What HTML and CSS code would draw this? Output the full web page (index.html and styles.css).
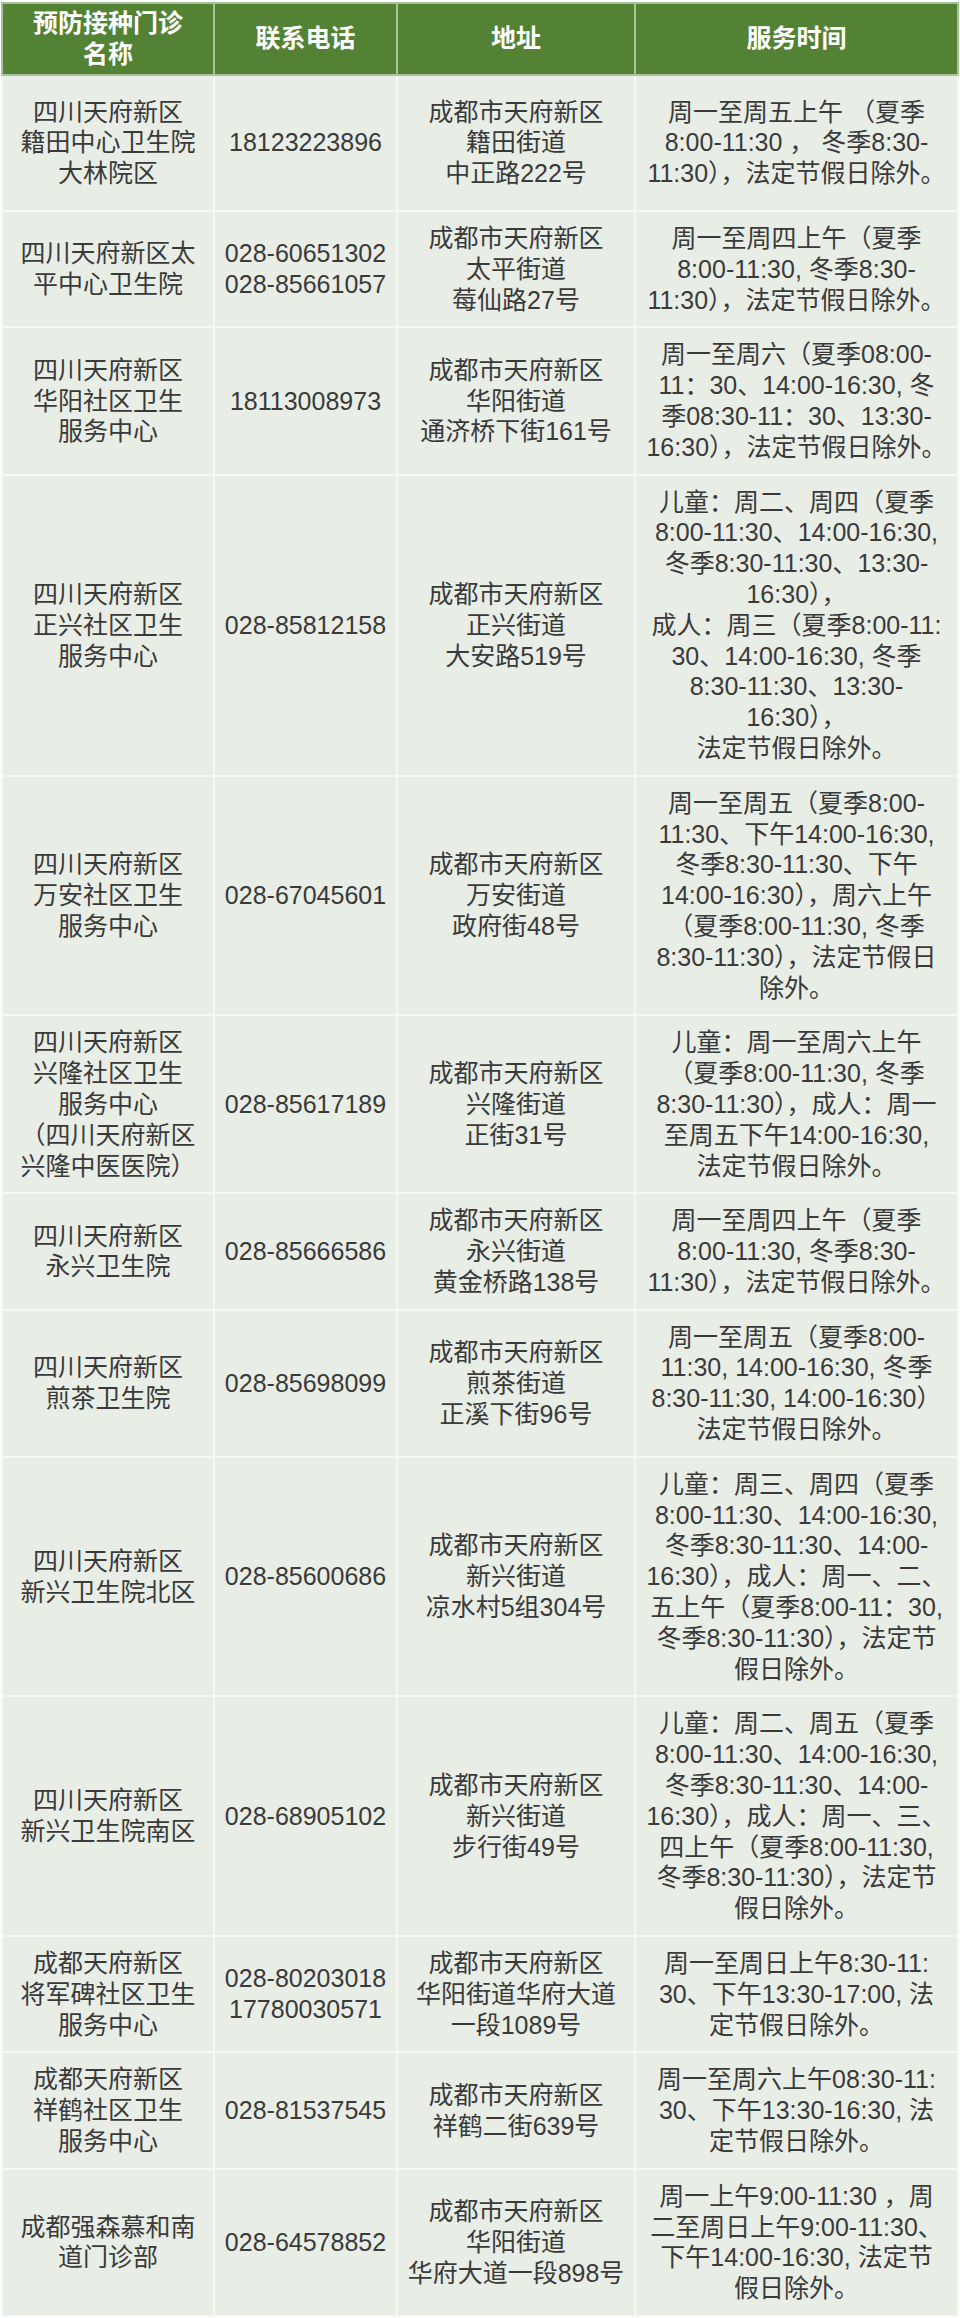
FILE: index.html
```html
<!DOCTYPE html>
<html lang="zh-CN">
<head>
<meta charset="utf-8">
<title>预防接种门诊</title>
<link rel="stylesheet" href="styles.css">
</head>
<body>
<table class="clinics">
  <colgroup>
    <col class="c-name">
    <col class="c-phone">
    <col class="c-addr">
    <col class="c-time">
  </colgroup>
  <thead>
    <tr>
      <th>预防接种门诊<br>名称</th>
      <th>联系电话</th>
      <th>地址</th>
      <th>服务时间</th>
    </tr>
  </thead>
  <tbody>
    <tr class="tall">
      <td>四川天府新区<br>籍田中心卫生院<br>大林院区</td>
      <td>18123223896</td>
      <td>成都市天府新区<br>籍田街道<br>中正路222号</td>
      <td>周一至周五上午 （夏季<br>8:00-11:30 ， 冬季8:30-<br>11:30），法定节假日除外。</td>
    </tr>
    <tr>
      <td>四川天府新区太<br>平中心卫生院</td>
      <td>028-60651302<br>028-85661057</td>
      <td>成都市天府新区<br>太平街道<br>莓仙路27号</td>
      <td>周一至周四上午（夏季<br>8:00-11:30, 冬季8:30-<br>11:30），法定节假日除外。</td>
    </tr>
    <tr>
      <td>四川天府新区<br>华阳社区卫生<br>服务中心</td>
      <td>18113008973</td>
      <td>成都市天府新区<br>华阳街道<br>通济桥下街161号</td>
      <td>周一至周六（夏季08:00-<br>11：30、14:00-16:30, 冬<br>季08:30-11：30、13:30-<br>16:30），法定节假日除外。</td>
    </tr>
    <tr>
      <td>四川天府新区<br>正兴社区卫生<br>服务中心</td>
      <td>028-85812158</td>
      <td>成都市天府新区<br>正兴街道<br>大安路519号</td>
      <td>儿童：周二、周四（夏季<br>8:00-11:30、14:00-16:30,<br>冬季8:30-11:30、13:30-<br>16:30），<br>成人：周三（夏季8:00-11:<br>30、14:00-16:30, 冬季<br>8:30-11:30、13:30-<br>16:30），<br>法定节假日除外。</td>
    </tr>
    <tr>
      <td>四川天府新区<br>万安社区卫生<br>服务中心</td>
      <td>028-67045601</td>
      <td>成都市天府新区<br>万安街道<br>政府街48号</td>
      <td>周一至周五（夏季8:00-<br>11:30、下午14:00-16:30,<br>冬季8:30-11:30、下午<br>14:00-16:30），周六上午<br>（夏季8:00-11:30, 冬季<br>8:30-11:30），法定节假日<br>除外。</td>
    </tr>
    <tr>
      <td>四川天府新区<br>兴隆社区卫生<br>服务中心<br>（四川天府新区<br>兴隆中医医院）</td>
      <td>028-85617189</td>
      <td>成都市天府新区<br>兴隆街道<br>正街31号</td>
      <td>儿童：周一至周六上午<br>（夏季8:00-11:30, 冬季<br>8:30-11:30），成人：周一<br>至周五下午14:00-16:30,<br>法定节假日除外。</td>
    </tr>
    <tr>
      <td>四川天府新区<br>永兴卫生院</td>
      <td>028-85666586</td>
      <td>成都市天府新区<br>永兴街道<br>黄金桥路138号</td>
      <td>周一至周四上午（夏季<br>8:00-11:30, 冬季8:30-<br>11:30），法定节假日除外。</td>
    </tr>
    <tr>
      <td>四川天府新区<br>煎茶卫生院</td>
      <td>028-85698099</td>
      <td>成都市天府新区<br>煎茶街道<br>正溪下街96号</td>
      <td>周一至周五（夏季8:00-<br>11:30, 14:00-16:30, 冬季<br>8:30-11:30, 14:00-16:30）<br>法定节假日除外。</td>
    </tr>
    <tr>
      <td>四川天府新区<br>新兴卫生院北区</td>
      <td>028-85600686</td>
      <td>成都市天府新区<br>新兴街道<br>凉水村5组304号</td>
      <td>儿童：周三、周四（夏季<br>8:00-11:30、14:00-16:30,<br>冬季8:30-11:30、14:00-<br>16:30），成人：周一、二、<br>五上午（夏季8:00-11：30,<br>冬季8:30-11:30），法定节<br>假日除外。</td>
    </tr>
    <tr>
      <td>四川天府新区<br>新兴卫生院南区</td>
      <td>028-68905102</td>
      <td>成都市天府新区<br>新兴街道<br>步行街49号</td>
      <td>儿童：周二、周五（夏季<br>8:00-11:30、14:00-16:30,<br>冬季8:30-11:30、14:00-<br>16:30），成人：周一、三、<br>四上午（夏季8:00-11:30,<br>冬季8:30-11:30），法定节<br>假日除外。</td>
    </tr>
    <tr>
      <td>成都天府新区<br>将军碑社区卫生<br>服务中心</td>
      <td>028-80203018<br>17780030571</td>
      <td>成都市天府新区<br>华阳街道华府大道<br>一段1089号</td>
      <td>周一至周日上午8:30-11:<br>30、下午13:30-17:00, 法<br>定节假日除外。</td>
    </tr>
    <tr>
      <td>成都天府新区<br>祥鹤社区卫生<br>服务中心</td>
      <td>028-81537545</td>
      <td>成都市天府新区<br>祥鹤二街639号</td>
      <td>周一至周六上午08:30-11:<br>30、下午13:30-16:30, 法<br>定节假日除外。</td>
    </tr>
    <tr>
      <td>成都强森慕和南<br>道门诊部</td>
      <td>028-64578852</td>
      <td>成都市天府新区<br>华阳街道<br>华府大道一段898号</td>
      <td>周一上午9:00-11:30 ，周<br>二至周日上午9:00-11:30、<br>下午14:00-16:30, 法定节<br>假日除外。</td>
    </tr>
  </tbody>
</table>
</body>
</html>
```

FILE: styles.css
```css
html, body {
  margin: 0;
  padding: 0;
  background: #ffffff;
}

body {
  padding: 2px 3px 0 1px;
}

.clinics {
  width: 956px;
  table-layout: fixed;
  border-collapse: collapse;
  font-family: "Liberation Sans", "Noto Sans CJK SC", sans-serif;
  font-size: 25px;
  line-height: 30.8px;
  color: #3a3a3a;
}

.c-name { width: 212px; }
.c-phone { width: 183px; }
.c-addr { width: 238px; }
.c-time { width: 323px; }

.clinics th,
.clinics td {
  border: 2px solid #f6f8f5;
  text-align: center;
  vertical-align: middle;
  white-space: nowrap;
  overflow: hidden;
}

.clinics th {
  background: #548235;
  color: #ffffff;
  font-weight: bold;
  padding: 4px 0;
  border-color: #a9c29a;
}

.clinics td {
  background: #e8ede6;
  padding: 11px 0;
}

.clinics tr.tall td {
  padding: 21px 0;
}
```
